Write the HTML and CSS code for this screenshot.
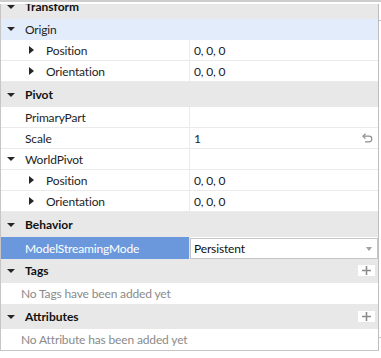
FILE: index.html
```html
<!DOCTYPE html>
<html lang="en">
<head>
    <meta charset="UTF-8">
    <meta name="viewport" content="width=device-width, initial-scale=1.0">
    <title>Properties</title>
    <link rel="stylesheet" href="styles.css">
</head>
<body>
    <div class="window">
        <div class="panel">
            <!-- scrolled property list -->
            <div class="viewport">
                <div class="props">
                    <div class="section"><span class="caret down"></span>Transform</div>

                    <div class="row open">
                        <div class="name"><span class="caret down"></span>Origin</div>
                        <div class="value"></div>
                    </div>
                    <div class="row">
                        <div class="name child"><span class="caret right"></span>Position</div>
                        <div class="value">0, 0, 0</div>
                    </div>
                    <div class="row">
                        <div class="name child"><span class="caret right"></span>Orientation</div>
                        <div class="value">0, 0, 0</div>
                    </div>

                    <div class="section"><span class="caret down"></span>Pivot</div>

                    <div class="row">
                        <div class="name"><span class="caret"></span>PrimaryPart</div>
                        <div class="value"></div>
                    </div>
                    <div class="row">
                        <div class="name"><span class="caret"></span>Scale</div>
                        <div class="value">
                            1
                            <svg class="reset" width="11" height="10" viewBox="0 0 11 10">
                                <path d="M3.5 0.8 L1 3.2 L3.5 5.6" fill="none" stroke="#8f8f8f" stroke-width="1.2"/>
                                <path d="M1.3 3.2 H7 A2.8 2.8 0 0 1 7 8.8 H3" fill="none" stroke="#8f8f8f" stroke-width="1.2"/>
                            </svg>
                        </div>
                    </div>
                    <div class="row">
                        <div class="name"><span class="caret down"></span>WorldPivot</div>
                        <div class="value"></div>
                    </div>
                    <div class="row">
                        <div class="name child"><span class="caret right"></span>Position</div>
                        <div class="value">0, 0, 0</div>
                    </div>
                    <div class="row">
                        <div class="name child"><span class="caret right"></span>Orientation</div>
                        <div class="value">0, 0, 0</div>
                    </div>

                    <div class="section"><span class="caret down"></span>Behavior</div>

                    <div class="row selected">
                        <div class="name"><span class="caret"></span>ModelStreamingMode</div>
                        <div class="value">
                            <div class="select">
                                Persistent
                                <span class="select-arrow"></span>
                            </div>
                        </div>
                    </div>

                    <div class="section">
                        <span class="caret down"></span>Tags
                        <span class="add-btn">
                            <svg width="9" height="9" viewBox="0 0 9 9"><path d="M4.5 0 V9 M0 4.5 H9" stroke="#8c8c8c" stroke-width="1.6"/></svg>
                        </span>
                    </div>
                    <div class="empty">No Tags have been added yet</div>

                    <div class="section">
                        <span class="caret down"></span>Attributes
                        <span class="add-btn">
                            <svg width="9" height="9" viewBox="0 0 9 9"><path d="M4.5 0 V9 M0 4.5 H9" stroke="#8c8c8c" stroke-width="1.6"/></svg>
                        </span>
                    </div>
                    <div class="empty">No Attribute has been added yet</div>
                </div>
            </div>

            <div class="scrollbar"><div class="thumb"></div></div>
        </div>
    </div>
</body>
</html>
```

FILE: styles.css
```css
* {
    margin: 0;
    padding: 0;
    box-sizing: border-box;
}

body {
    background-color: #fff;
    font-family: Lato, "Noto Sans", sans-serif;
    font-size: 12px;
    letter-spacing: -0.15px;
    color: #1e1e1e;
}

.window {
    width: 381px;
    border-top: 2px solid #cdcdcd;
    padding-top: 2px;
}

.panel {
    display: flex;
    border-left: 1px solid #c6c6c6;
}

/* 滚动区域 */
.viewport {
    width: 379px;
    height: 347px;
    overflow: hidden;
    border-right: 1px solid #bdbdbd;
    border-bottom: 1px solid #c6c6c6;
}

.props {
    margin-top: -10px;
}

.scrollbar {
    width: 2px;
    padding-top: 16px;
}

.thumb {
    height: 318px;
    border-top: 1px solid #c6c6c6;
    border-bottom: 1px solid #c6c6c6;
}

/* 分组标题 */
.section {
    height: 25px;
    display: flex;
    align-items: center;
    padding-left: 6px;
    background-color: #e8e8e8;
    font-weight: 700;
    letter-spacing: 0;
    color: #111;
}

.add-btn {
    margin-left: auto;
    margin-right: 3px;
    width: 17px;
    height: 11px;
    background-color: #fff;
    display: flex;
    align-items: center;
    justify-content: center;
}

.add-btn svg {
    display: block;
}

/* 属性行 */
.row {
    height: 21px;
    display: grid;
    grid-template-columns: 189px 1fr;
    border-bottom: 1px solid #ebebeb;
}

.row.open {
    background-color: #e3ecfb;
    border-bottom-color: #e3ecfb;
}

.name {
    display: flex;
    align-items: center;
    padding-left: 6px;
    border-right: 1px solid #ebebeb;
    white-space: nowrap;
}

.name.child {
    padding-left: 27px;
}

.row.open .name {
    border-right-color: #e3ecfb;
}

.row.selected .name {
    background-color: #6b98dd;
    color: #fff;
    border-right-color: #e6e6e6;
}

.value {
    display: flex;
    align-items: center;
    padding-left: 4px;
    padding-right: 5px;
    color: #1a1a2a;
}

.reset {
    margin-left: auto;
}

.caret {
    width: 18px;
    height: 8px;
    flex-shrink: 0;
    display: flex;
    align-items: center;
}

.caret.down::before {
    content: "";
    border-left: 4px solid transparent;
    border-right: 4px solid transparent;
    border-top: 4px solid #262626;
}

.caret.right::before {
    content: "";
    margin-left: 1px;
    border-top: 4px solid transparent;
    border-bottom: 4px solid transparent;
    border-left: 5px solid #262626;
}

.row.selected .value {
    padding: 0;
}

.select {
    width: 100%;
    height: 21px;
    margin-top: 1px;
    display: flex;
    align-items: center;
    padding-left: 3px;
    padding-right: 5px;
    background-color: #fff;
    border: 1px solid #c4c4c4;
    color: #111;
}

.select-arrow {
    margin-left: auto;
    border-left: 3.5px solid transparent;
    border-right: 3.5px solid transparent;
    border-top: 4px solid #a0a0a0;
}

.empty {
    height: 21px;
    display: flex;
    align-items: center;
    padding-left: 20px;
    color: #8a8a8a;
    background-color: #fff;
}
```
